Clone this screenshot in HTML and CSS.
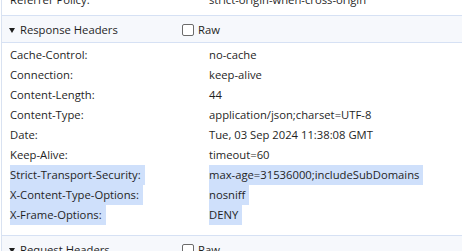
FILE: index.html
```html
<!DOCTYPE html>
<html>
<head>
<meta charset="utf-8">
<link rel="stylesheet" href="styles.css">
</head>
<body>
<div class="panel">
  <div class="section section-prev">
    <div class="rows rows-prev">
      <div class="key">Referrer Policy:</div><div class="val">strict-origin-when-cross-origin</div>
    </div>
  </div>

  <div class="section">
    <div class="header">
      <div class="title">
        <svg class="tri" width="6" height="5" viewBox="0 0 6 5"><polygon points="0,0 6,0 3,5" fill="#1f1f1f"/></svg>
        <span>Response Headers</span>
      </div>
      <label class="raw"><span class="box"></span><span>Raw</span></label>
    </div>
    <div class="rows">
      <div class="key">Cache-Control:</div><div class="val">no-cache</div>
      <div class="key">Connection:</div><div class="val">keep-alive</div>
      <div class="key">Content-Length:</div><div class="val">44</div>
      <div class="key">Content-Type:</div><div class="val">application/json;charset=UTF-8</div>
      <div class="key">Date:</div><div class="val">Tue, 03 Sep 2024 11:38:08 GMT</div>
      <div class="key">Keep-Alive:</div><div class="val">timeout=60</div>
      <div class="key"><span class="sel">Strict-Transport-Security:</span></div><div class="val"><span class="sel">max-age=31536000;includeSubDomains</span></div>
      <div class="key"><span class="sel">X-Content-Type-Options:</span></div><div class="val"><span class="sel">nosniff</span></div>
      <div class="key"><span class="sel">X-Frame-Options:</span></div><div class="val"><span class="sel">DENY</span></div>
    </div>
  </div>

  <div class="section">
    <div class="header">
      <div class="title">
        <svg class="tri" width="6" height="5" viewBox="0 0 6 5"><polygon points="0,0 6,0 3,5" fill="#1f1f1f"/></svg>
        <span>Request Headers</span>
      </div>
      <label class="raw"><span class="box"></span><span>Raw</span></label>
    </div>
  </div>
</div>
</body>
</html>
```
FILE: styles.css
```css
html, body {
  margin: 0;
  padding: 0;
  background: #ffffff;
  overflow: hidden;
}
body {
  font-family: "Open Sans", "Noto Sans", sans-serif;
  font-size: 11.25px;
  color: #1f1f1f;
}
.panel {
  margin-left: 1px;
  border-left: 1px solid #d9e2f1;
  height: 300px;
}
.section-prev {
  margin-top: -10px;
}
.header {
  display: grid;
  grid-template-columns: 173px auto;
  align-items: center;
  height: 26px;
  padding-left: 7px;
  background: #f6f8fc;
  border-top: 1px solid #d6e1f4;
  border-bottom: 1px solid #d6e1f4;
  line-height: 26px;
}
.title {
  display: flex;
  align-items: center;
  gap: 5px;
  padding-top: 1px;
}
.tri {
  display: block;
  margin-top: 1px;
}
.raw {
  display: flex;
  align-items: center;
  gap: 4px;
  padding-top: 1px;
}
.box {
  width: 10px;
  height: 10px;
  border: 1px solid #6b6b6b;
  border-radius: 2px;
  background: #ffffff;
}
.rows {
  display: grid;
  grid-template-columns: 199px 1fr;
  padding: 2px 0 10px 8px;
  line-height: 20px;
}
.rows-prev {
  padding: 0 0 5px 8px;
}
.key, .val {
  height: 20px;
  white-space: nowrap;
}
.val {
  padding-left: 0;
}
.sel {
  display: inline-block;
  background: #cfe0fb;
  padding-right: 4px;
  height: 20px;
}
```
